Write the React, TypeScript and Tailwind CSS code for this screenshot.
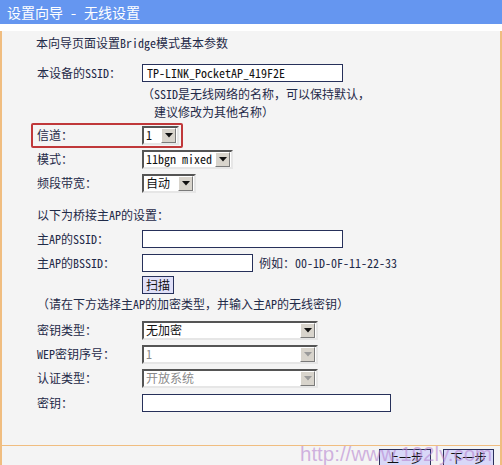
const font = 'font-["Noto_Sans_Mono_CJK_SC","Noto_Sans_CJK_SC",sans-serif]'

function Arrow({ disabled }: { disabled?: boolean }) {
  return (
    <span className="ml-auto flex h-[15px] w-[15px] items-center justify-center border border-t-white border-l-white border-b-[#7a7a7a] border-r-[#7a7a7a] bg-[#d8d4cc]">
      <svg width="8" height="5" viewBox="0 0 8 5">
        <path d="M0 0h8L4 4.5z" fill={disabled ? '#9a9a9a' : '#111'} />
      </svg>
    </span>
  )
}

function Select({ value, w, disabled }: { value: string; w: string; disabled?: boolean }) {
  return (
    <div
      className={`flex h-[19px] items-center border-2 border-t-[#555] border-l-[#555] border-b-[#e6e6e6] border-r-[#e6e6e6] bg-white pr-px ${w}`}
    >
      <span className={`pl-[2px] text-[12px] leading-none ${disabled ? 'text-[#8a8a8a]' : 'text-[#111]'}`}>{value}</span>
      <Arrow disabled={disabled} />
    </div>
  )
}

function Input({ w, value }: { w: string; value?: string }) {
  return (
    <div className={`flex h-[18px] items-center border border-[#26305a] bg-white px-[4px] text-[12px] leading-none text-[#111] ${w}`}>
      {value}
    </div>
  )
}

function Row({ label, children, className = '' }: { label: string; children?: React.ReactNode; className?: string }) {
  return (
    <div className={`flex h-[24px] items-center ${className}`}>
      <span className="w-[105px] shrink-0">{label}</span>
      {children}
    </div>
  )
}

export default function App() {
  return (
    <div className={`w-[502px] h-[465px] text-[12px] leading-[14px] text-[#1f2a48] ${font}`}>
      <div className="flex h-[24px] items-center bg-[#6596f0] pl-[7px] text-[14px] text-white">
        设置向导 - 无线设置
      </div>

      <div className="h-[414px] border-x-2 border-[#f0bd80] bg-[#f4f4f4] pl-[35px]">
        <div className="mt-[7px] flex h-[24px] items-center -ml-[1px]">本向导页面设置Bridge模式基本参数</div>

        <Row label="本设备的SSID：" className="mt-[6px]">
          <Input w="w-[201px]" value="TP-LINK_PocketAP_419F2E" />
        </Row>
        <div className="ml-[105px] flex h-[18px] items-center">（SSID是无线网络的名称，可以保持默认，</div>
        <div className="ml-[117px] flex h-[18px] items-center">建议修改为其他名称）</div>

        <Row label="信道：" className="relative mt-[2px]">
          <span className="absolute -left-[6px] top-0 h-[25px] w-[152px] rounded-[2px] border-2 border-[#c0383a]" />
          <Select value="1" w="w-[37px]" />
        </Row>
        <Row label="模式：">
          <Select value="11bgn mixed" w="w-[91px]" />
        </Row>
        <Row label="频段带宽：">
          <Select value="自动" w="w-[54px]" />
        </Row>

        <div className="mt-[8px] flex h-[24px] items-center">以下为桥接主AP的设置：</div>
        <Row label="主AP的SSID：">
          <Input w="w-[201px]" />
        </Row>
        <Row label="主AP的BSSID：">
          <Input w="w-[111px]" />
          <span className="ml-[6px]">例如：00-1D-0F-11-22-33</span>
        </Row>
        <div className="ml-[105px] flex h-[20px] items-center">
          <button className="flex h-[18px] w-[32px] items-center justify-center border border-[#26305a] bg-[#e0e0f8] text-[12px] leading-none text-[#111]">
            扫描
          </button>
        </div>
        <div className="flex h-[18px] items-center">（请在下方选择主AP的加密类型，并输入主AP的无线密钥）</div>

        <Row label="密钥类型：" className="mt-[5px]">
          <Select value="无加密" w="w-[176px]" />
        </Row>
        <Row label="WEP密钥序号：">
          <Select value="1" w="w-[176px]" disabled />
        </Row>
        <Row label="认证类型：">
          <Select value="开放系统" w="w-[176px]" disabled />
        </Row>
        <Row label="密钥：" className="mt-px">
          <Input w="w-[249px]" />
        </Row>
      </div>

      <div className="relative flex h-[27px] items-start justify-end gap-[12px] border-x-2 border-t border-b-2 border-[#f0bd80] bg-[#f4f4f4] pr-[6px] pt-[3px]">
        <button className="flex h-[17px] w-[52px] items-center justify-center border border-[#2a2f5a] bg-[#d8d8f8] text-[12px] leading-none text-[#111]">
          上一步
        </button>
        <button className="flex h-[17px] w-[51px] items-center justify-center border border-[#2a2f5a] bg-[#d8d8f8] text-[12px] leading-none text-[#111]">
          下一步
        </button>
        <span className='pointer-events-none absolute left-[298px] top-[-5px] font-["Liberation_Sans",Arial,sans-serif] text-[20.5px] leading-[26px] text-[#b784d0]/60'>
          http://www.192ly.com
        </span>
      </div>
    </div>
  )
}
